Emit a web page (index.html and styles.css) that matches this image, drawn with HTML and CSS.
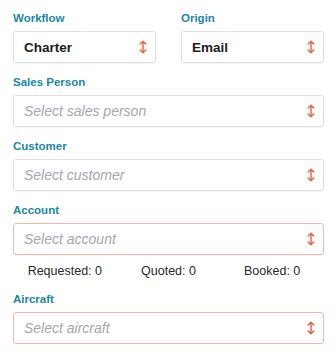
FILE: index.html
```html
<!DOCTYPE html>
<html>
<head>
<meta charset="utf-8">
<link rel="stylesheet" href="styles.css">
</head>
<body>
<div class="form">
  <div class="row two">
    <div class="field">
      <div class="label">Workflow</div>
      <div class="select"><span class="value">Charter</span><svg class="arrow" width="8" height="14" viewBox="0 0 8 14"><path d="M4 1.2V12.8M1.2 4L4 1.2L6.8 4M1.2 10L4 12.8L6.8 10"/></svg></div>
    </div>
    <div class="field">
      <div class="label">Origin</div>
      <div class="select"><span class="value">Email</span><svg class="arrow" width="8" height="14" viewBox="0 0 8 14"><path d="M4 1.2V12.8M1.2 4L4 1.2L6.8 4M1.2 10L4 12.8L6.8 10"/></svg></div>
    </div>
  </div>
  <div class="field">
    <div class="label">Sales Person</div>
    <div class="select"><span class="placeholder">Select sales person</span><svg class="arrow" width="8" height="14" viewBox="0 0 8 14"><path d="M4 1.2V12.8M1.2 4L4 1.2L6.8 4M1.2 10L4 12.8L6.8 10"/></svg></div>
  </div>
  <div class="field">
    <div class="label">Customer</div>
    <div class="select"><span class="placeholder">Select customer</span><svg class="arrow" width="8" height="14" viewBox="0 0 8 14"><path d="M4 1.2V12.8M1.2 4L4 1.2L6.8 4M1.2 10L4 12.8L6.8 10"/></svg></div>
  </div>
  <div class="field">
    <div class="label">Account</div>
    <div class="select invalid"><span class="placeholder">Select account</span><svg class="arrow" width="8" height="14" viewBox="0 0 8 14"><path d="M4 1.2V12.8M1.2 4L4 1.2L6.8 4M1.2 10L4 12.8L6.8 10"/></svg></div>
    <div class="stats">
      <span>Requested: 0</span>
      <span>Quoted: 0</span>
      <span>Booked: 0</span>
    </div>
  </div>
  <div class="field">
    <div class="label">Aircraft</div>
    <div class="select invalid"><span class="placeholder">Select aircraft</span><svg class="arrow" width="8" height="14" viewBox="0 0 8 14"><path d="M4 1.2V12.8M1.2 4L4 1.2L6.8 4M1.2 10L4 12.8L6.8 10"/></svg></div>
  </div>
</div>
</body>
</html>
```

FILE: styles.css
```css
html, body {
  margin: 0;
  background: #ffffff;
}
body {
  padding: 11px 12px 0 13px;
  font-family: "Liberation Sans", Arial, sans-serif;
}
.form {
  display: flex;
  flex-direction: column;
  gap: 12px;
}
.row.two {
  display: grid;
  grid-template-columns: 1fr 1fr;
  column-gap: 25px;
}
.field {
  display: flex;
  flex-direction: column;
}
.label {
  font-size: 11.5px;
  line-height: 14px;
  font-weight: bold;
  color: #1a88a6;
  margin-bottom: 6px;
}
.select {
  height: 32px;
  box-sizing: border-box;
  border: 1px solid #dedfe1;
  border-radius: 3px;
  background: #fff;
  display: flex;
  align-items: center;
  justify-content: space-between;
  padding: 0 8px 0 10px;
  box-shadow: 0 1px 1px rgba(0,0,0,0.04);
}
.select.invalid {
  border-color: #f1b7ad;
}
.value {
  font-size: 13.5px;
  font-weight: bold;
  color: #1c1c1c;
}
.placeholder {
  font-size: 14px;
  font-style: italic;
  color: #a4a7ac;
}
.arrow {
  flex: none;
}
.arrow path {
  fill: none;
  stroke: #e6603f;
  stroke-width: 1.4;
  stroke-linecap: round;
  stroke-linejoin: round;
}
.stats {
  display: grid;
  grid-template-columns: 1fr 1fr 1fr;
  margin-top: 8px;
  font-size: 12.5px;
  line-height: 17px;
  color: #2a2a2a;
  text-align: center;
}
```
